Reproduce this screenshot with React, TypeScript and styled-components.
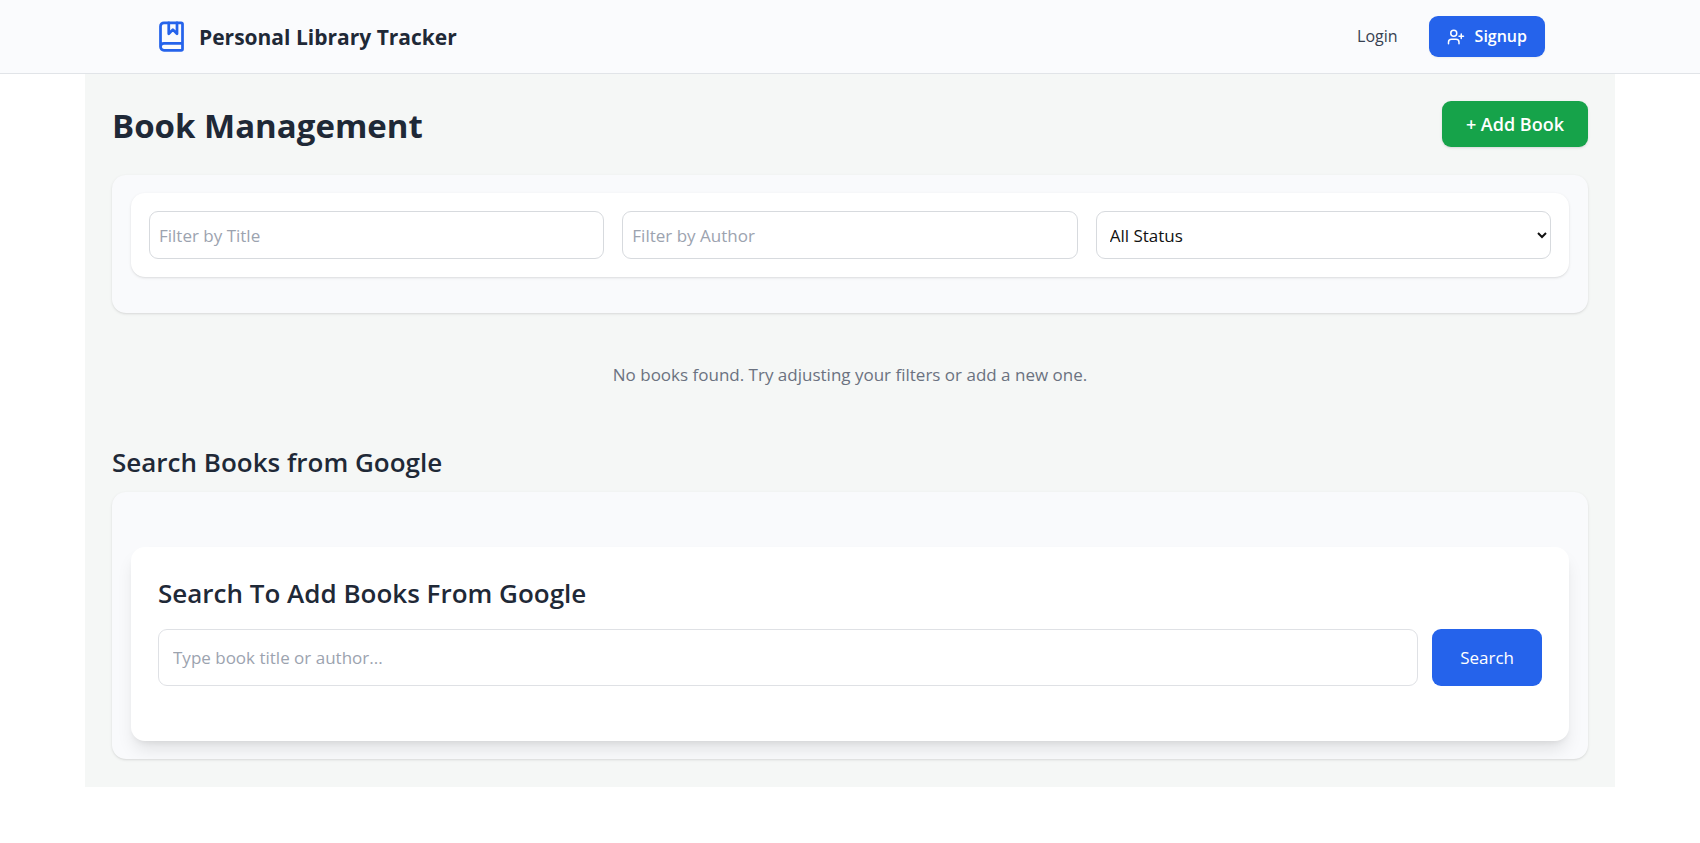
import React, { useState } from "react";
import styled, { createGlobalStyle } from "styled-components";
import { BookMarked, UserPlus } from "lucide-react";

const GlobalStyle = createGlobalStyle`
  *, *::before, *::after { box-sizing: border-box; }
  body {
    margin: 0;
    background: #ffffff;
    color: #1f2937;
    font-family: "Segoe UI", "Open Sans", "Noto Sans", sans-serif;
    font-size: 17px;
    line-height: 27px;
  }
  h1, h2, h3, p { margin: 0; }
  button, input, select { font: inherit; }
`;

const Header = styled.header`
  background: #fafbfd;
  border-bottom: 1px solid #e1e4e8;
`;

const HeaderInner = styled.div`
  display: flex;
  align-items: center;
  justify-content: space-between;
  max-width: 1440px;
  margin: 0 auto;
  padding: 16px 25px;
`;

const Brand = styled.a`
  display: flex;
  align-items: center;
  gap: 11px;
  color: #1f2937;
  font-size: 21px;
  font-weight: 700;
  text-decoration: none;

  svg { color: #2563eb; }
`;

const BrandName = styled.span`
  padding-top: 2px;
`;

const Nav = styled.nav`
  display: flex;
  align-items: center;
  gap: 31px;
`;

const NavLink = styled.a`
  color: #374151;
  font-size: 16px;
  font-weight: 500;
  text-decoration: none;
`;

const SignupLink = styled(NavLink)`
  display: flex;
  align-items: center;
  gap: 10px;
  padding: 7px 18px;
  border-radius: 9px;
  background: #2563eb;
  color: #ffffff;
  font-weight: 600;
  box-shadow: 0 1px 2px rgba(0, 0, 0, 0.05);
`;

const Main = styled.main`
  width: 90%;
  margin: 0 auto;
  padding: 27px 27px 28px;
  background: #f5f7f6;
`;

const TitleRow = styled.div`
  display: flex;
  align-items: flex-start;
  justify-content: space-between;
  margin-bottom: 27px;
`;

const PageTitle = styled.h1`
  padding-top: 3px;
  font-size: 33px;
  line-height: 44px;
  font-weight: 700;
`;

const SectionTitle = styled.h2`
  font-size: 26px;
  line-height: 36px;
  font-weight: 600;
`;

const Button = styled.button<{ $tone: "green" | "blue" }>`
  padding: ${(p) => (p.$tone === "green" ? "9px 24px" : "15px 28px")};
  border: 0;
  border-radius: 9px;
  background: ${(p) => (p.$tone === "green" ? "#16a34a" : "#2563eb")};
  color: #ffffff;
  font-size: ${(p) => (p.$tone === "green" ? "18px" : "17px")};
  font-weight: ${(p) => (p.$tone === "green" ? 600 : 400)};
  line-height: ${(p) => (p.$tone === "green" ? "28px" : "27px")};
  box-shadow: ${(p) => (p.$tone === "green" ? "0 1px 3px rgba(0, 0, 0, 0.1), 0 1px 2px -1px rgba(0, 0, 0, 0.1)" : "none")};
  cursor: pointer;
`;

const Panel = styled.section`
  padding: 18px 19px;
  border-radius: 14px;
  background: #f9fafc;
  box-shadow: 0 1px 3px rgba(0, 0, 0, 0.1), 0 1px 2px -1px rgba(0, 0, 0, 0.1);
`;

const FilterCard = styled.form`
  display: grid;
  grid-template-columns: repeat(3, 1fr);
  gap: 18px;
  margin-bottom: 18px;
  padding: 18px;
  border-radius: 14px;
  background: #ffffff;
  box-shadow: 0 1px 3px rgba(0, 0, 0, 0.1), 0 1px 2px -1px rgba(0, 0, 0, 0.1);
`;

const TextInput = styled.input`
  width: 100%;
  height: 48px;
  padding: 9px;
  border: 1px solid #d7dade;
  border-radius: 9px;
  background: #ffffff;
  color: #111827;

  &::placeholder { color: #9ca3af; opacity: 1; }
`;

const SearchInput = styled(TextInput)`
  flex: 1;
  height: 57px;
  padding: 14px;
  border-color: #dfe1e5;
`;

const StatusSelect = styled.select`
  width: 100%;
  height: 48px;
  padding: 9px;
  border: 1px solid #d7dade;
  border-radius: 9px;
  background: #ffffff;
  color: #111111;
`;

const EmptyMessage = styled.p`
  padding: 48px 0 56px;
  color: #6b7280;
  text-align: center;
`;

const SearchPanel = styled(Panel)`
  margin-top: 12px;
  padding-top: 55px;
  overflow: hidden;
`;

const SearchCard = styled.div`
  padding: 28px 27px 55px;
  border-radius: 14px;
  background: #ffffff;
  box-shadow: 0 11px 17px -3px rgba(0, 0, 0, 0.1), 0 4px 7px -4px rgba(0, 0, 0, 0.1);
`;

const SearchRow = styled.form`
  display: flex;
  gap: 14px;
  margin-top: 18px;
`;

export default function App() {
  const [title, setTitle] = useState("");
  const [author, setAuthor] = useState("");
  const [status, setStatus] = useState("all");
  const [query, setQuery] = useState("");

  return (
    <>
      <GlobalStyle />
      <Header>
        <HeaderInner>
          <Brand href="#">
            <BookMarked size={33} aria-hidden="true" />
            <BrandName>Personal Library Tracker</BrandName>
          </Brand>
          <Nav>
            <NavLink href="#login">Login</NavLink>
            <SignupLink href="#signup">
              <UserPlus size={18} aria-hidden="true" />
              Signup
            </SignupLink>
          </Nav>
        </HeaderInner>
      </Header>

      <Main>
        <TitleRow>
          <PageTitle>Book Management</PageTitle>
          <Button type="button" $tone="green">+ Add Book</Button>
        </TitleRow>

        <Panel>
          <FilterCard onSubmit={(e) => e.preventDefault()}>
            <TextInput
              aria-label="Filter by Title"
              placeholder="Filter by Title"
              value={title}
              onChange={(e) => setTitle(e.target.value)}
            />
            <TextInput
              aria-label="Filter by Author"
              placeholder="Filter by Author"
              value={author}
              onChange={(e) => setAuthor(e.target.value)}
            />
            <StatusSelect aria-label="Status" value={status} onChange={(e) => setStatus(e.target.value)}>
              <option value="all">All Status</option>
            </StatusSelect>
          </FilterCard>
        </Panel>

        <EmptyMessage>No books found. Try adjusting your filters or add a new one.</EmptyMessage>

        <SectionTitle>Search Books from Google</SectionTitle>
        <SearchPanel>
          <SearchCard>
            <SectionTitle>Search To Add Books From Google</SectionTitle>
            <SearchRow onSubmit={(e) => e.preventDefault()}>
              <SearchInput
                aria-label="Book title or author"
                placeholder="Type book title or author..."
                value={query}
                onChange={(e) => setQuery(e.target.value)}
              />
              <Button type="submit" $tone="blue">Search</Button>
            </SearchRow>
          </SearchCard>
        </SearchPanel>
      </Main>
    </>
  );
}
